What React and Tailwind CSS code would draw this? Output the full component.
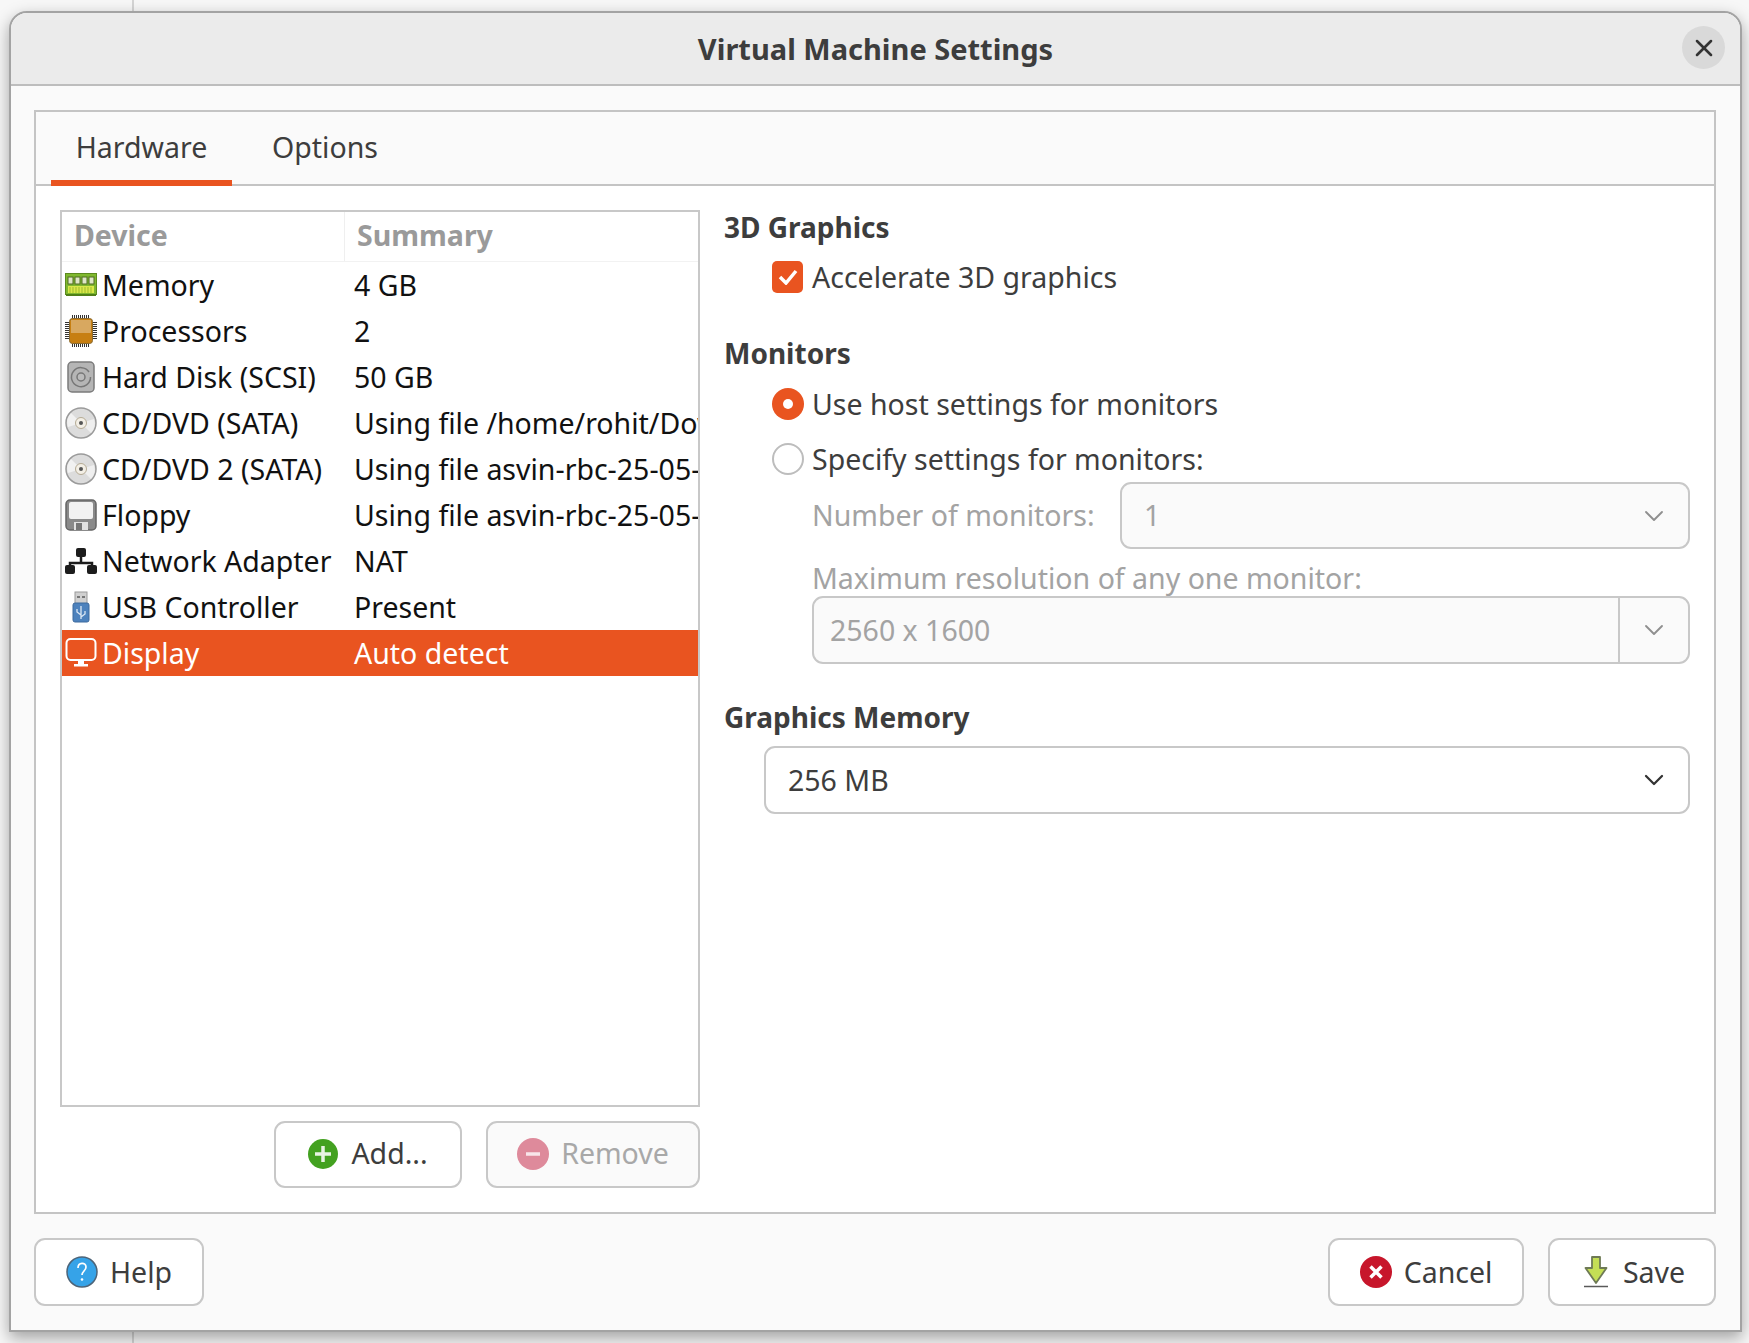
import { ChevronDown, X } from 'lucide-react';

const MemoryIcon = () => (
  <svg width="32" height="24" viewBox="0 0 32 24" className="shrink-0">
    <rect x="0.5" y="0.5" width="31" height="21" fill="#7fb82e" stroke="#5c8a1e" />
    <rect x="1" y="21" width="30" height="2" fill="#4f7f18" />
    <rect x="3" y="13" width="26" height="7" fill="#d9e84a" />
    <path d="M5 14v6M8 14v6M11 14v6M14 14v6M17 14v6M20 14v6M23 14v6M26 14v6" stroke="#9dbb2c" strokeWidth="1" />
    {[3, 10, 17, 24].map((x) => (
      <rect key={x} x={x} y="4" width="5" height="7" fill="#dfe6c8" stroke="#4e6b22" />
    ))}
  </svg>
);

const CpuIcon = () => (
  <svg width="32" height="32" viewBox="0 0 32 32" className="shrink-0">
    <path d="M7 1.500h18M7 30.500h18M2 7v18M30 7v18" stroke="#333" strokeWidth="4" strokeDasharray="1 1" fill="none" />
    <rect x="4.500" y="3.500" width="23" height="25" rx="3" fill="#c77f12" stroke="#8a6a30" />
    <rect x="6" y="5" width="20" height="13" fill="#d8a860" />
  </svg>
);

const DiskIcon = () => (
  <svg width="28" height="32" viewBox="0 0 28 32" className="shrink-0">
    <rect x="1" y="1" width="26" height="30" rx="4" fill="#b5b5b5" stroke="#7b7b7b" strokeWidth="1.500" />
    <path d="M22 11A9.500 9.500 0 1 0 23.500 16" fill="none" stroke="#777" strokeWidth="1.500" />
    <circle cx="14" cy="16" r="4" fill="#bbb" stroke="#777" strokeWidth="1.500" />
  </svg>
);

const CdIcon = () => (
  <svg width="32" height="32" viewBox="0 0 32 32" className="shrink-0">
    <circle cx="16" cy="16" r="15" fill="#dcdcdc" stroke="#9a9a9a" strokeWidth="1.500" />
    <path d="M16 16L6 6A14 14 0 0 0 3 20Z" fill="#f1f1f1" />
    <path d="M16 16L26 26A14 14 0 0 0 29 12Z" fill="#efefef" />
    <circle cx="16" cy="16" r="5.500" fill="#f3efe6" stroke="#b5ab95" />
    <circle cx="16" cy="16" r="2" fill="#555" />
  </svg>
);

const FloppyIcon = () => (
  <svg width="32" height="32" viewBox="0 0 32 32" className="shrink-0">
    <rect x="1" y="1" width="30" height="30" rx="4" fill="#8a8a8a" stroke="#666" strokeWidth="1.500" />
    <rect x="4" y="3" width="24" height="17" rx="2" fill="#f2f2f2" />
    <rect x="9" y="23" width="14" height="8" fill="#e2e2e2" />
    <rect x="11" y="24" width="6" height="7" fill="#777" />
  </svg>
);

const NetworkIcon = () => (
  <svg width="32" height="28" viewBox="0 0 32 28" className="shrink-0">
    <rect x="11" y="1" width="10" height="9" rx="2" fill="#1c1c1c" />
    <path d="M16 9v7M5 20v-4h22v4" stroke="#1c1c1c" strokeWidth="2.500" fill="none" />
    <rect x="0" y="18" width="10" height="9" rx="2" fill="#1c1c1c" />
    <rect x="22" y="18" width="10" height="9" rx="2" fill="#1c1c1c" />
  </svg>
);

const UsbIcon = () => (
  <svg width="18" height="32" viewBox="0 0 18 32" className="shrink-0">
    <rect x="3" y="1" width="12" height="12" fill="#d0d0d0" stroke="#9a9a9a" />
    <rect x="5" y="5" width="3" height="2" fill="#777" />
    <rect x="10" y="5" width="3" height="2" fill="#777" />
    <rect x="1" y="12" width="16" height="19" rx="2" fill="#4d82bd" stroke="#3c6a9e" />
    <path d="M9 15v13M9 24l-4-3v-3M9 26l4-3v-3" stroke="#dce8f4" strokeWidth="1.300" fill="none" />
  </svg>
);

const DisplayIcon = () => (
  <svg width="32" height="32" viewBox="0 0 32 32" className="shrink-0">
    <rect x="1.500" y="2" width="29" height="21" rx="4" fill="none" stroke="#fff" strokeWidth="2" />
    <path d="M13 23h6v4h-6zM9 27h14v2.500H9z" fill="#fff" />
  </svg>
);

const PlusIcon = () => (
  <svg width="30" height="30" viewBox="0 0 30 30" className="shrink-0">
    <circle cx="15" cy="15" r="15" fill="#43a120" />
    <path d="M15 7v16M7 15h16" stroke="#e8f3e2" strokeWidth="3.500" />
  </svg>
);

const MinusIcon = () => (
  <svg width="32" height="32" viewBox="0 0 32 32" className="shrink-0">
    <circle cx="16" cy="16" r="16" fill="#de8a9b" />
    <path d="M9 16h14" stroke="#f8e6ea" strokeWidth="3.500" />
  </svg>
);

const HelpIcon = () => (
  <svg width="32" height="32" viewBox="0 0 32 32" className="shrink-0">
    <circle cx="16" cy="16" r="15" fill="#36a3e8" stroke="#4d6478" strokeWidth="1.500" />
    <path d="M12 12c0-6 8-6 8-1 0 4-4 4-4 8" stroke="#fff" strokeWidth="1.700" fill="none" />
    <circle cx="16" cy="23.500" r="1.300" fill="#fff" />
  </svg>
);

const CancelIcon = () => (
  <svg width="32" height="32" viewBox="0 0 32 32" className="shrink-0">
    <circle cx="16" cy="16" r="16" fill="#c7162b" />
    <path d="M10.500 10.500l11 11M21.500 10.500l-11 11" stroke="#fff" strokeWidth="3.500" />
  </svg>
);

const SaveIcon = () => (
  <svg width="24" height="32" viewBox="0 0 24 32" className="shrink-0">
    <path d="M8 1h8v11h6.500L12 27 1.500 12H8z" fill="#c4de55" stroke="#6e7a55" strokeWidth="1.800" strokeLinejoin="round" />
    <path d="M0 30.500h24" stroke="#5a5a5a" strokeWidth="1.500" />
  </svg>
);

const devices = [
  ['Memory', '4 GB', MemoryIcon],
  ['Processors', '2', CpuIcon],
  ['Hard Disk (SCSI)', '50 GB', DiskIcon],
  ['CD/DVD (SATA)', 'Using file /home/rohit/Downloads/ubuntu.iso', CdIcon],
  ['CD/DVD 2 (SATA)', 'Using file asvin-rbc-25-05-01.iso', CdIcon],
  ['Floppy', 'Using file asvin-rbc-25-05-01.flp', FloppyIcon],
  ['Network Adapter', 'NAT', NetworkIcon],
  ['USB Controller', 'Present', UsbIcon],
  ['Display', 'Auto detect', DisplayIcon],
];

const DeviceRow = ({ name, summary, Icon, selected }) => (
  <div className={`flex h-[46px] items-center ${selected ? 'bg-[#e95420] text-white' : 'text-[#111]'}`}>
    <div className="flex w-[292px] shrink-0 items-center">
      <div className="flex w-[40px] shrink-0 justify-center pl-[2px] pr-[5px]">
        <Icon />
      </div>
      <span className="whitespace-nowrap">{name}</span>
    </div>
    <span className="whitespace-nowrap">{summary}</span>
  </div>
);

const Button = ({ className, children }) => (
  <button className={`flex items-center justify-center rounded-[11px] border-2 border-[#c8c8c8] ${className}`}>
    {children}
  </button>
);

const Heading = ({ className, children }) => (
  <div className={`h-[36px] text-[28px] font-bold leading-[36px] text-[#3d3d3d] ${className}`}>{children}</div>
);

export default function App() {
  return (
    <div className="relative h-[1343px] w-[1749px] overflow-hidden bg-[#f7f7f7] pl-[9px] pt-[11px] font-['Noto_Sans',sans-serif] text-[28.5px] text-[#3d3d3d]">
      <div className="absolute left-[132px] top-0 h-full w-[2px] bg-[#d4d4d4]" />
      <div className="relative flex h-[1321px] w-[1733px] flex-col overflow-hidden rounded-t-[18px] border-2 border-[#a3a3a3] bg-[#fafafa] shadow-[0_6px_16px_rgba(0,0,0,0.35)]">
        {/* title bar */}
        <div className="relative flex h-[73px] shrink-0 items-center justify-center border-b-2 border-[#bdbdbd] bg-[#ebebeb]">
          <span className="text-[29px] font-bold">Virtual Machine Settings</span>
          <div className="absolute right-[15px] top-[13px] flex h-[43px] w-[43px] items-center justify-center rounded-full bg-[#d9d9d9]">
            <X size={28} strokeWidth={2.2} color="#333" />
          </div>
        </div>

        <div className="flex min-h-0 flex-1 flex-col pb-[24px] pl-[23px] pr-[24px] pt-[24px]">
          {/* notebook */}
          <div className="flex h-[1104px] shrink-0 flex-col border-2 border-[#c4c4c4]">
            <div className="flex h-[74px] shrink-0 border-b-2 border-[#c4c4c4] pl-[15px]">
              <div className="-mb-[2px] flex h-[74px] w-[181px] items-center justify-center border-b-[6px] border-[#e95420] pt-[2px]">Hardware</div>
              <div className="-mb-[2px] ml-[40px] flex h-[74px] items-center pb-[4px]">Options</div>
            </div>

            <div className="flex min-h-0 flex-1 gap-[24px] bg-white pl-[24px] pr-[24px] pt-[24px]">
              {/* device list */}
              <div className="flex w-[640px] shrink-0 flex-col">
                <div className="h-[897px] overflow-hidden border-2 border-[#c8c8c8]">
                  <div className="flex h-[50px] border-b border-[#f2f2f2] font-bold text-[#9a9a9a]">
                    <div className="flex w-[283px] shrink-0 items-center border-r border-[#efefef] pb-[3px] pl-[12px]">Device</div>
                    <div className="flex items-center pb-[3px] pl-[12px]">Summary</div>
                  </div>
                  {devices.map(([name, summary, Icon]) => (
                    <DeviceRow key={name} name={name} summary={summary} Icon={Icon} selected={name === 'Display'} />
                  ))}
                </div>
                <div className="mt-[14px] flex justify-end gap-[24px]">
                  <Button className="h-[67px] w-[188px] gap-[13px] bg-white pb-[2px]">
                    <PlusIcon />
                    Add...
                  </Button>
                  <Button className="h-[67px] w-[214px] gap-[12px] bg-[#fafafa] pb-[2px] text-[#a8a8a8]">
                    <MinusIcon />
                    Remove
                  </Button>
                </div>
              </div>

              {/* display options */}
              <div className="-mt-px min-w-0 flex-1">
                <Heading>3D Graphics</Heading>
                <div className="ml-[48px] mt-[14px] flex h-[36px] items-center gap-[9px]">
                  <div className="flex h-[32px] w-[31px] items-center justify-center rounded-[5px] bg-[#e95420]">
                    <svg width="20" height="16" viewBox="0 0 20 16">
                      <path d="M2 8l6 6L18 2" stroke="#fff" strokeWidth="3.500" fill="none" />
                    </svg>
                  </div>
                  Accelerate 3D graphics
                </div>

                <Heading className="mt-[40px]">Monitors</Heading>
                <div className="ml-[48px] mt-[15px] flex h-[36px] items-center gap-[8px]">
                  <div className="flex h-[32px] w-[32px] items-center justify-center rounded-full bg-[#e95420]">
                    <div className="h-[10px] w-[10px] rounded-full bg-white" />
                  </div>
                  Use host settings for monitors
                </div>
                <div className="ml-[48px] mt-[19px] flex h-[36px] items-center gap-[8px]">
                  <div className="h-[32px] w-[32px] rounded-full border-2 border-[#bdbdbd] bg-white" />
                  Specify settings for monitors:
                </div>

                <div className="ml-[88px] mt-[5px] text-[#a3a3a3]">
                  <div className="flex h-[67px] items-center justify-between">
                    Number of monitors:
                    <div className="flex h-[67px] w-[570px] items-center justify-between rounded-[11px] border-2 border-[#c8c8c8] bg-[#fafafa] pl-[22px] pr-[18px]">
                      1
                      <ChevronDown size={32} strokeWidth={1.4} color="#8f8f8f" />
                    </div>
                  </div>
                  <div className="mt-[12px] h-[35px] leading-[35px]">Maximum resolution of any one monitor:</div>
                  <div className="flex h-[68px] items-center rounded-[11px] border-2 border-[#c8c8c8] bg-[#fafafa]">
                    <div className="flex h-full min-w-0 flex-1 items-center border-r-2 border-[#c8c8c8] pl-[16px]">2560 x 1600</div>
                    <div className="flex w-[68px] justify-center">
                      <ChevronDown size={32} strokeWidth={1.4} color="#8f8f8f" />
                    </div>
                  </div>
                </div>

                <Heading className="mt-[35px]">Graphics Memory</Heading>
                <div className="ml-[40px] mt-[11px] flex h-[68px] items-center justify-between rounded-[11px] border-2 border-[#c8c8c8] bg-white pl-[22px] pr-[18px]">
                  256 MB
                  <ChevronDown size={32} strokeWidth={1.7} color="#333" />
                </div>
              </div>
            </div>
          </div>

          {/* footer buttons */}
          <div className="mt-[24px] flex items-center justify-between">
            <Button className="h-[68px] w-[170px] gap-[12px] bg-white">
              <HelpIcon />
              Help
            </Button>
            <div className="flex gap-[24px]">
              <Button className="h-[68px] w-[196px] gap-[12px] bg-white">
                <CancelIcon />
                Cancel
              </Button>
              <Button className="h-[68px] w-[168px] gap-[15px] bg-white pl-[5px]">
                <SaveIcon />
                Save
              </Button>
            </div>
          </div>
        </div>
      </div>
    </div>
  );
}
